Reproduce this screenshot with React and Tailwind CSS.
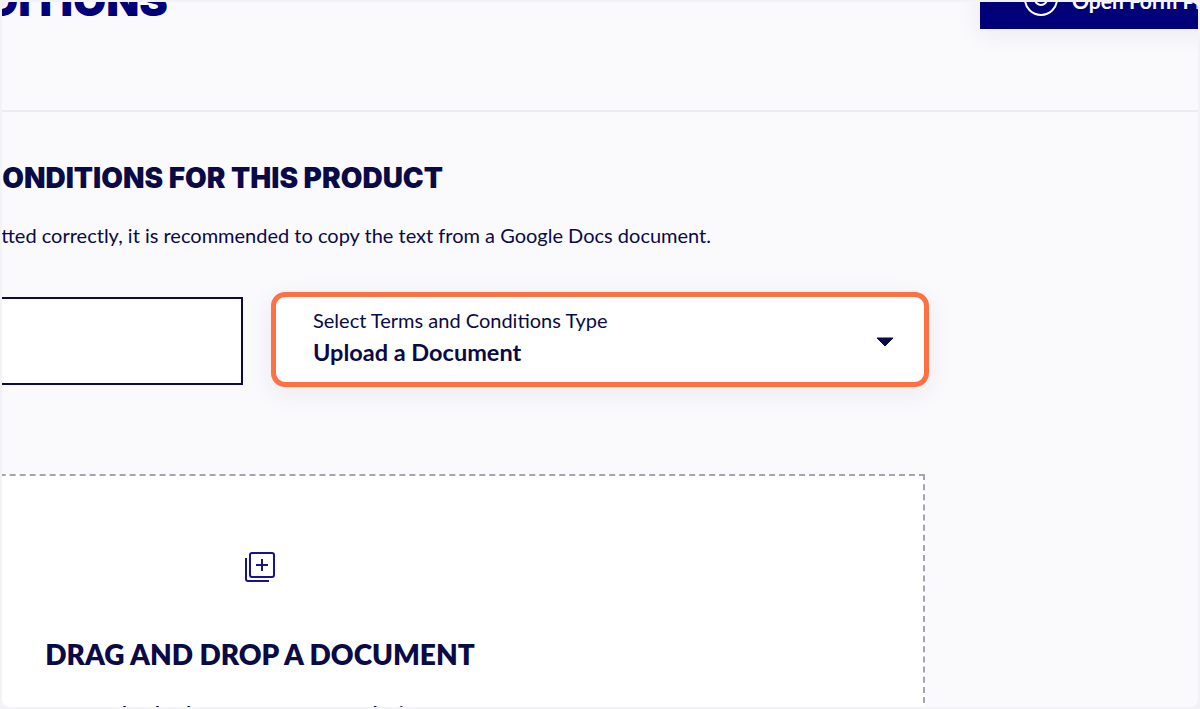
export default function App() {
  return (
    <div className="h-[709px] w-[1200px] overflow-hidden bg-[#f2f2f7] p-[2px] font-['Lato',sans-serif] text-[#0a0a46]">
      <div className="h-full w-full overflow-hidden rounded-lg bg-[#fafafd]">
        {/* page header, scrolled so only its lower edge shows */}
        <div className="flex h-[110px] items-start justify-between border-b-2 border-[#ebebf0]">
          <h1 className="-mt-[23px] w-[166px] shrink-0 overflow-hidden whitespace-nowrap text-right font-['Inter',sans-serif] text-[43px] font-black leading-[42px] text-[#000078] [direction:rtl]">
            CONDITIONS
          </h1>
          <div className="-mt-[14px] -mr-[60px] flex h-[41px] w-[278px] shrink-0 items-start gap-[14px] bg-[#000078] pl-[44px] text-white shadow-[0_4px_24px_rgba(20,20,80,0.08)]">
            <span className="-mt-[6px] flex h-[34px] w-[34px] shrink-0 items-center justify-center rounded-full border-2 border-white">
              <span className="h-[14px] w-[14px] rounded-full border-2 border-white" />
            </span>
            <span className="-mt-[1px] whitespace-nowrap text-[21px] font-bold leading-[28px]">Open Form Preview</span>
          </div>
        </div>

        <div className="-ml-[402px] w-[1325px]">
          <h2 className="mt-[48px] w-[843px] whitespace-nowrap text-right font-['Inter',sans-serif] text-[28px] font-black leading-[36px]">
            TERMS AND CONDITIONS FOR THIS PRODUCT
          </h2>
          <p className="mt-[26px] w-[1111px] whitespace-nowrap text-right text-[20px] leading-[26px]">
            To ensure your terms are formatted correctly, it is recommended to copy the text from a Google Docs document.
          </p>

          <div className="mt-[44px] flex items-start gap-[28px]">
            <div className="mt-[5px] h-[88px] w-[643px] shrink-0 border-2 border-[#0a0a46] bg-white" />
            <div className="flex h-[95px] w-[658px] shrink-0 items-center justify-between rounded-[14px] border-[5px] border-[#ff7043] bg-white pl-[37px] pr-[30px] shadow-[0_6px_24px_rgba(20,20,80,0.08)]">
              <div className="mb-[8px]">
                <div className="text-[20px] leading-[26px]">Select Terms and Conditions Type</div>
                <div className="mt-[6px] text-[23.5px] font-bold leading-[26px]">Upload a Document</div>
              </div>
              <svg width="18" height="10" viewBox="0 0 18 10" className="mt-[4px]">
                <path d="M1 1h16l-8 8z" fill="#0a0a46" stroke="#0a0a46" strokeLinejoin="round" />
              </svg>
            </div>
          </div>

          <div className="mt-[87px] h-[300px] border-2 border-dashed border-[#a4a4b4] bg-white">
            <div className="ml-[401px] flex w-[514px] flex-col items-center">
              <svg width="32" height="32" viewBox="0 0 32 32" fill="none" stroke="#14148c" strokeWidth="2" className="mt-[75px]">
                <rect x="6" y="2" width="24" height="24" rx="2" />
                <path d="M2 7v21a2 2 0 0 0 2 2h21" />
                <path d="M18 8v12M12 14h12" />
              </svg>
              <h3 className="mt-[53px] whitespace-nowrap text-[28px] font-extrabold leading-[36px]">DRAG AND DROP A DOCUMENT</h3>
              <p className="mt-[29px] whitespace-nowrap text-[20px] font-bold leading-[26px]">Upload a document from your device</p>
            </div>
          </div>
        </div>
      </div>
    </div>
  );
}
